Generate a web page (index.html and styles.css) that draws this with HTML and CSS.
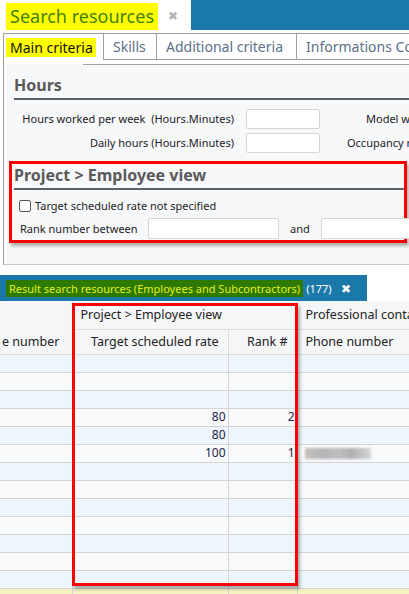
FILE: index.html
```html
<!DOCTYPE html>
<html lang="en">
<head>
    <meta charset="UTF-8">
    <title>Search resources</title>
    <link rel="stylesheet" href="styles.css">
</head>
<body>
<div class="titlebar">
    <span class="title">Search resources</span>
    <span class="close">&#x2716;</span>
    <div class="bluefill"></div>
</div>

<div class="criteria">
    <div class="tabs">
        <span class="tab active"><span class="hl">Main criteria</span></span>
        <span class="tab tab-skills">Skills</span>
        <span class="tab tab-add">Additional criteria</span>
        <span class="tab">Informations Complémentaires</span>
    </div>
    <div class="panel">
        <h2 class="section-title">Hours</h2>
        <div class="hours">
            <label>Hours worked per week&nbsp; (Hours.Minutes)</label>
            <input type="text">
            <label class="lbl2 lbl-model">Model working time</label>
            <label>Daily hours (Hours.Minutes)</label>
            <input type="text">
            <label class="lbl2 lbl-occ">Occupancy rate</label>
        </div>

        <div class="redbox">
            <h3 class="sub-title">Project &gt; Employee view</h3>
            <label class="check"><input type="checkbox">Target scheduled rate not specified</label>
            <div class="rank">
                <span>Rank number between</span>
                <input type="text">
                <span class="and">and</span>
                <input type="text">
            </div>
        </div>
    </div>
</div>

<div class="resultbar">
    <span class="hl">Result search resources (Employees and Subcontractors)</span>
    <span class="count">(177)</span>
    <span class="x">&#x2716;</span>
</div>

<div class="grid">
    <table>
        <colgroup>
            <col class="c1"><col class="c2"><col class="c3"><col class="c4">
        </colgroup>
        <thead>
            <tr class="h1">
                <th rowspan="2" class="bottom">e number</th>
                <th colspan="2">Project &gt; Employee view</th>
                <th>Professional contact</th>
            </tr>
            <tr class="h2">
                <th class="num">Target scheduled rate</th>
                <th class="num">Rank #</th>
                <th>Phone number</th>
            </tr>
        </thead>
        <tbody>
            <tr><td></td><td></td><td></td><td></td></tr>
            <tr><td></td><td></td><td></td><td></td></tr>
            <tr><td></td><td></td><td></td><td></td></tr>
            <tr><td></td><td class="num">80</td><td class="num">2</td><td></td></tr>
            <tr><td></td><td class="num">80</td><td></td><td></td></tr>
            <tr><td></td><td class="num">100</td><td class="num">1</td><td><span class="blur"></span></td></tr>
            <tr><td></td><td></td><td></td><td></td></tr>
            <tr><td></td><td></td><td></td><td></td></tr>
            <tr><td></td><td></td><td></td><td></td></tr>
            <tr><td></td><td></td><td></td><td></td></tr>
            <tr><td></td><td></td><td></td><td></td></tr>
            <tr><td></td><td></td><td></td><td></td></tr>
            <tr><td></td><td></td><td></td><td></td></tr>
            <tr class="total"><td></td><td></td><td></td><td></td></tr>
        </tbody>
    </table>
    <div class="mark"></div>
</div>
</body>
</html>
```

FILE: styles.css
```css
*{padding:0;margin:0;box-sizing:border-box;}
body{
    width: 409px;
    height: 594px;
    overflow: hidden;
    background: #fff;
    color: #222;
    font-family: "Noto Sans", "Open Sans", sans-serif;
    font-size: 11px;
}

/* title */
.titlebar{
    display: flex;
    align-items: flex-start;
    height: 33px;
}
.titlebar .title{
    margin: 3px 0 0 6px;
    padding: 0 4px;
    background: #ffff00;
    color: #41820c;
    font-size: 18px;
    line-height: 27px;
}
.titlebar .close{
    margin: 8px 0 0 10px;
    color: #b4b4b4;
    font-size: 12px;
    line-height: 16px;
}
.titlebar .bluefill{
    margin-left: auto;
    width: 218px;
    height: 30px;
    background: #1b79a9;
}

/* criteria tabs */
.criteria{
    margin-left: 3px;
    border-left: 1px solid #a0a0a0;
}
.tabs{
    display: flex;
    height: 27px;
    border-top: 1px solid #a0a0a0;
    overflow: hidden;
}
.tab{
    flex-shrink: 0;
    padding: 0 9px;
    border-right: 1px solid #a0a0a0;
    border-bottom: 1px solid #a0a0a0;
    color: #5b7089;
    font-size: 14px;
    line-height: 25px;
    white-space: nowrap;
}
.tab.active{
    width: 100px;
    padding: 0 0 0 2px;
    border-bottom: none;
    background: #fff;
    color: #111;
}
.tab.active .hl{
    display: inline-block;
    margin-top: 4px;
    padding: 0 3px 0 4px;
    background: #ffff00;
    line-height: 19px;
}
.tab-skills{ width: 53px; }
.tab-add{ width: 140px; }

.panel{
    margin-top: 4px;
    padding-bottom: 21px;
    background: #f7f8fa;
    border-bottom: 1px solid #c8c8c8;
}
.panel::before{
    content: "";
    display: block;
    height: 1px;
    margin-left: 79px;
    background: #a0a0a0;
}

.section-title{
    margin: 10px 0 0 10px;
    padding-bottom: 3px;
    border-bottom: 2px solid #5c6167;
    color: #5a5a5a;
    font-size: 16px;
    font-weight: bold;
    line-height: 20px;
}

.hours{
    display: grid;
    grid-template-columns: 230px 74px 1fr;
    column-gap: 12px;
    row-gap: 4px;
    margin-top: 9px;
}
.hours label{
    text-align: right;
    line-height: 20px;
    white-space: nowrap;
}
.hours .lbl2{ text-align: left; }
.hours .lbl-model{ margin-left: 34px; }
.hours .lbl-occ{ margin-left: 15px; }

input[type=text]{
    height: 20px;
    border: 1px solid #d6d6d6;
    border-radius: 2px;
    background: #fff;
}

.redbox{
    height: 82px;
    margin: 8px 2px 0 5px;
    border: 3px solid #f00;
    box-shadow: 2px 3px 3px rgba(0,0,0,.3);
}
.sub-title{
    margin-left: 2px;
    padding-bottom: 2px;
    border-bottom: 2px solid #5c6167;
    color: #5a5a5a;
    font-size: 16px;
    font-weight: bold;
    line-height: 22px;
}
.check{
    display: flex;
    align-items: center;
    margin: 8px 0 0 7px;
    line-height: 16px;
}
.check input{
    appearance: none;
    width: 12px;
    height: 12px;
    margin-right: 4px;
    border: 1px solid #555;
    border-radius: 2px;
    background: #fff;
}
.rank{
    display: grid;
    grid-template-columns: 128px 131px 42px 1fr;
    align-items: center;
    margin: 4px 0 0 8px;
    white-space: nowrap;
}
.rank input{ height: 21px; }
.rank .and{ padding-left: 11px; }

/* result */
.resultbar{
    display: flex;
    align-items: center;
    width: 367px;
    height: 26px;
    margin-top: 10px;
    padding-left: 6px;
    background: #1b79a9;
    white-space: nowrap;
}
.resultbar .hl{
    padding: 0 3px;
    background: #2e7a00;
    color: #e4ee1e;
    line-height: 17px;
}
.resultbar .count{
    margin-left: 3px;
    color: #fff;
}
.resultbar .x{
    margin-left: 9px;
    color: #fff;
    font-size: 12px;
}

.grid{
    position: relative;
}
.grid table{
    width: 560px;
    border-collapse: collapse;
    table-layout: fixed;
}
.grid .c1{ width: 72px; }
.grid .c2{ width: 156px; }
.grid .c3{ width: 69px; }
.grid .c4{ width: 263px; }

.grid th{
    padding: 0 8px;
    border: 1px solid #dadada;
    border-top: none;
    background: #f5f6f8;
    font-size: 12.5px;
    font-weight: normal;
    text-align: left;
    white-space: nowrap;
    overflow: hidden;
}
.grid th:first-child{ border-left: none; }
.grid .h1 th{ height: 28px; }
.grid .h2 th{ height: 25px; }
.grid th.bottom{
    padding: 0 0 0 2px;
    vertical-align: bottom;
    line-height: 25px;
}
.grid th.num{ text-align: right; padding-right: 9px; }

.grid td{
    height: 18px;
    padding: 0 2px;
    border: 1px solid #d4d4d4;
    color: #22224a;
    font-size: 12px;
    line-height: 16px;
}
.grid td:first-child{ border-left: none; }
.grid td.num{ text-align: right; }
.grid tbody tr:nth-child(odd) td{ background: #eef5fd; }
.grid tbody tr:nth-child(even) td{ background: #f8f9fb; }
.grid tbody tr.total td{ background: #f5f3c2; }

.blur{
    display: block;
    width: 66px;
    height: 11px;
    margin-left: 5px;
    background: linear-gradient(90deg, #c4c0bc, #b4b4b6 30%, #c0c0c2 50%, #b0b0b2 70%, #d4d6d8);
    filter: blur(1px);
}

.mark{
    position: absolute;
    left: 72px;
    top: 2px;
    width: 226px;
    height: 283px;
    border: 3px solid #f00;
    box-shadow: 2px 3px 3px rgba(0,0,0,.3);
}
```
